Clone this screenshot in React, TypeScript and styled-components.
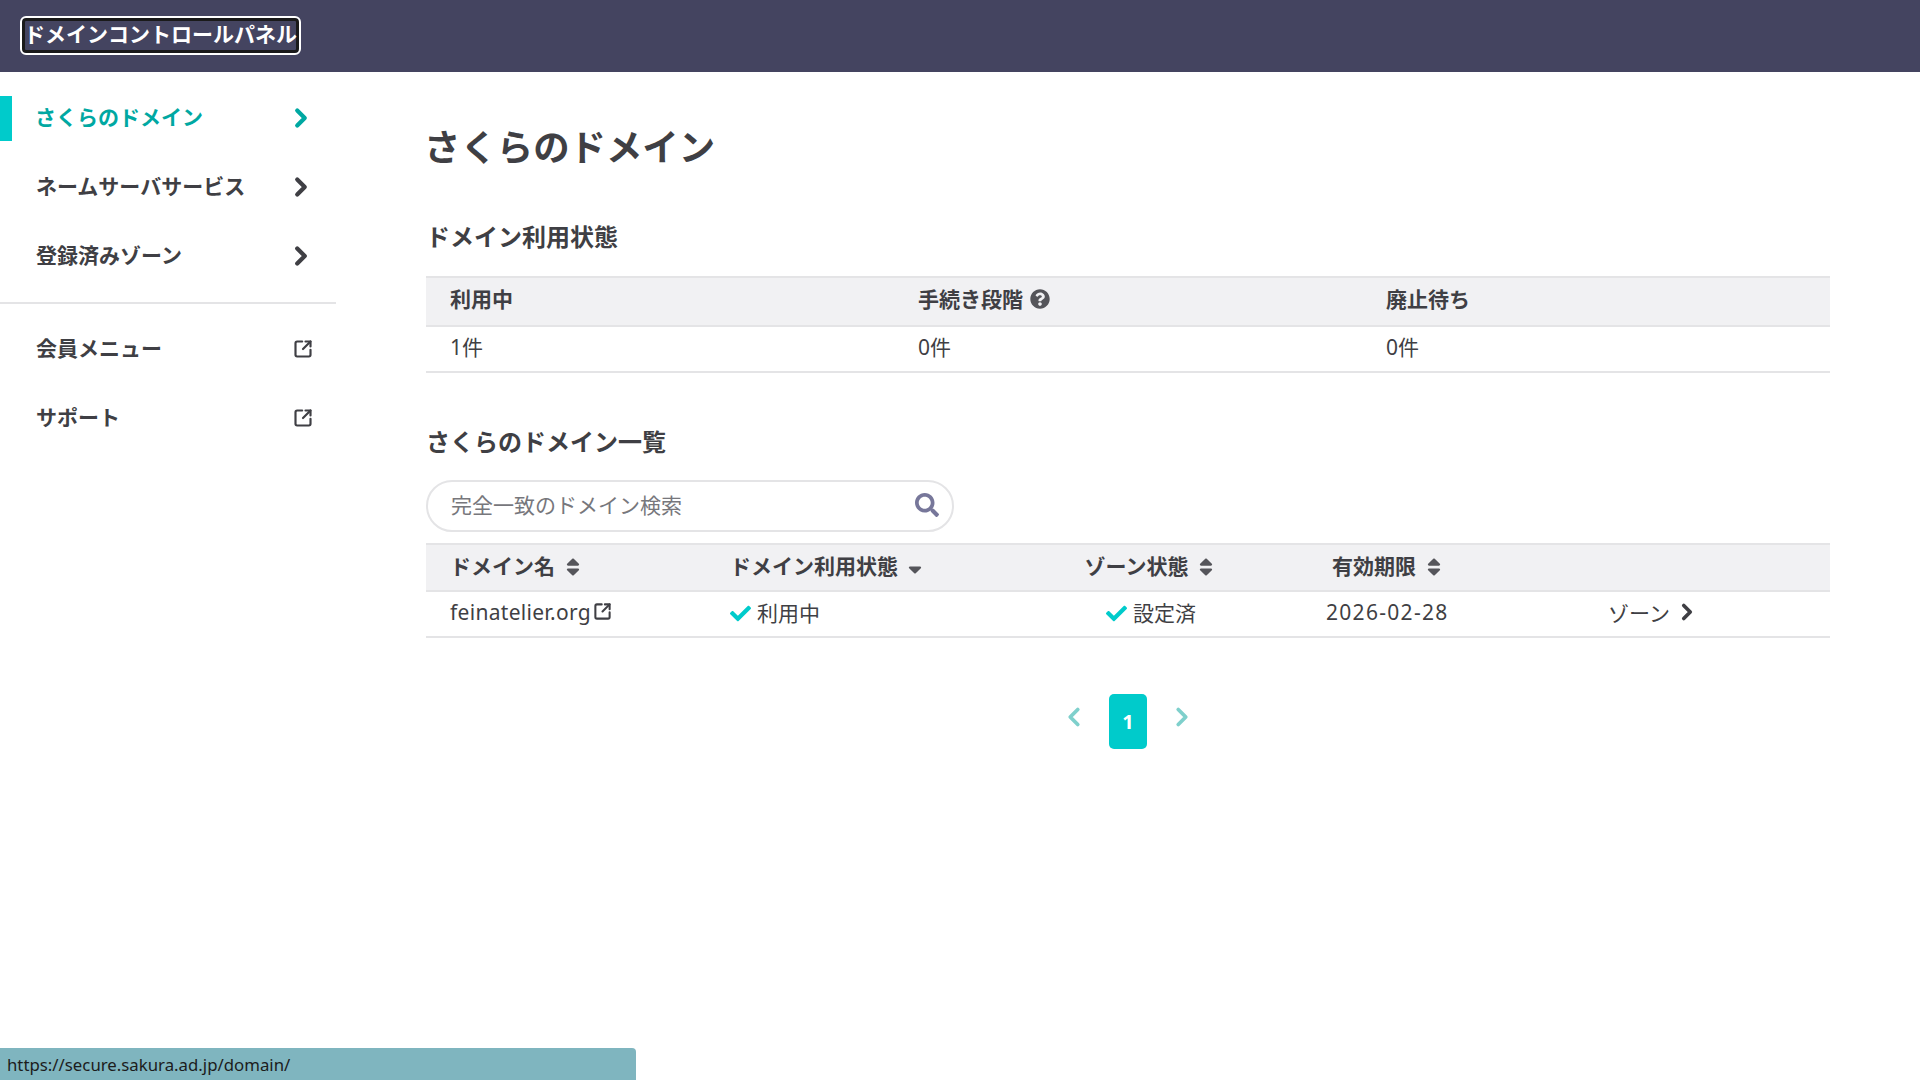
import React from 'react';
import styled, { createGlobalStyle } from 'styled-components';
import { ChevronRight, ChevronLeft, SquareArrowOutUpRight } from 'lucide-react';
import { FaCheck, FaQuestionCircle, FaSearch, FaSort, FaSortDown } from 'react-icons/fa';

const GlobalStyle = createGlobalStyle`
  html, body {
    margin: 0;
    padding: 0;
    background: #fff;
    color: #3f3f44;
    font-family: "Noto Sans", "Noto Sans CJK JP", sans-serif;
    font-size: 21px;
  }
  * {
    box-sizing: border-box;
  }
`;

const Page = styled.div`
  width: 1920px;
  height: 1080px;
  overflow: hidden;
`;

const Header = styled.header`
  height: 72px;
  background: #444460;
  display: flex;
  align-items: center;
  padding: 0 0 1px 20px;
`;

const Logo = styled.a`
  height: 39px;
  width: 281px;
  display: flex;
  align-items: center;
  justify-content: center;
  padding-bottom: 5px;
  border: 2px solid #fff;
  border-radius: 6px;
  box-shadow: inset 0 0 0 3px #1a1a1a;
  color: #fff;
  font-size: 21px;
  font-weight: 700;
  white-space: nowrap;
`;

const Body = styled.div`
  display: flex;
`;

const Sidebar = styled.nav`
  width: 336px;
  flex: none;
  padding-top: 24px;
`;

const NavGroup = styled.div<{ $divided?: boolean }>`
  display: flex;
  flex-direction: column;
  gap: 24px;
  padding-bottom: ${(p) => (p.$divided ? '23px' : '0')};
  margin-bottom: ${(p) => (p.$divided ? '23px' : '0')};
  border-bottom: ${(p) => (p.$divided ? '2px solid #e4e4e6' : 'none')};
`;

const NavItem = styled.a<{ $active?: boolean }>`
  height: 45px;
  display: flex;
  align-items: center;
  justify-content: space-between;
  padding: 0 20px 0 ${(p) => (p.$active ? '23px' : '36px')};
  font-size: 21px;
  font-weight: 700;
  color: ${(p) => (p.$active ? '#00a8a2' : '#3f3f44')};
  border-left: ${(p) => (p.$active ? '12px solid #00cbcb' : 'none')};
`;

const NavLabel = styled.span`
  margin-bottom: 6px;
`;

const NavChevron = styled(ChevronRight)`
  margin-bottom: 2px;
`;

const NavExternal = styled(SquareArrowOutUpRight)`
  margin: 0 3px 2px 0;
`;

const Main = styled.main`
  width: 1404px;
  margin-left: 90px;
  padding-top: 49px;
`;

const PageTitle = styled.h1`
  margin: 0 0 46px -2px;
  font-size: 36.4px;
  line-height: 52px;
  font-weight: 700;
`;

const SectionTitle = styled.h2<{ $tight?: boolean }>`
  margin: 0 0 ${(p) => (p.$tight ? '20px' : '21px')};
  font-size: 24px;
  line-height: 36px;
  font-weight: 700;
`;

const SummaryRow = styled.div<{ $head?: boolean }>`
  display: grid;
  grid-template-columns: repeat(3, 468px);
  height: ${(p) => (p.$head ? '51px' : '46px')};
  padding-bottom: ${(p) => (p.$head ? '7px' : '6px')};
  align-items: center;
  background: ${(p) => (p.$head ? '#f1f1f3' : '#fff')};
  border-bottom: 2px solid #e4e4e6;
  border-top: ${(p) => (p.$head ? '2px solid #e4e4e6' : 'none')};
  font-weight: ${(p) => (p.$head ? 700 : 400)};
  margin-bottom: ${(p) => (p.$head ? '0' : '51px')};
`;

const SummaryCell = styled.div`
  padding-left: 24px;
  display: flex;
  align-items: center;
  gap: 7px;
`;

const HelpIcon = styled(FaQuestionCircle)`
  font-size: 20px;
  color: #55555a;
  margin-top: 2px;
`;

const SearchBox = styled.div`
  width: 528px;
  height: 52px;
  display: flex;
  align-items: center;
  justify-content: space-between;
  padding: 0 13px 4px 23px;
  border: 2px solid #e4e4e6;
  border-radius: 26px;
  margin-bottom: 11px;
  color: #77777c;
`;

const SearchIcon = styled(FaSearch)`
  font-size: 24px;
  color: #77779a;
  margin-top: 1px;
`;

const ListRow = styled.div<{ $head?: boolean }>`
  display: grid;
  grid-template-columns: 280px 294px 300px 283px 247px;
  height: ${(p) => (p.$head ? '49px' : '46px')};
  padding-bottom: 5px;
  align-items: center;
  background: ${(p) => (p.$head ? '#f1f1f3' : '#fff')};
  border-bottom: 2px solid #e4e4e6;
  border-top: ${(p) => (p.$head ? '2px solid #e4e4e6' : 'none')};
  font-weight: ${(p) => (p.$head ? 700 : 400)};
`;

const ListCell = styled.div<{ $center?: boolean; $left?: number; $spacing?: number }>`
  display: flex;
  align-items: center;
  gap: 6px;
  padding-left: ${(p) => (p.$center ? 2 : p.$left ?? 24)}px;
  justify-content: ${(p) => (p.$center ? 'center' : 'flex-start')};
  letter-spacing: ${(p) => p.$spacing ?? 0}px;
`;

const SortIcon = styled(FaSort)`
  font-size: 22px;
  color: #55555a;
  margin: 4px 0 0 1px;
`;

const SortDownIcon = styled(FaSortDown)`
  font-size: 22px;
  color: #55555a;
  margin-left: 0;
`;

const CheckIcon = styled(FaCheck)`
  font-size: 21px;
  color: #00cbcb;
  margin-top: 4px;
`;

const RowExternal = styled(SquareArrowOutUpRight)`
  margin: 0 0 1px -4px;
`;

const RowChevron = styled(ChevronRight)`
  margin-left: -2px;
`;

const Pagination = styled.div`
  display: flex;
  justify-content: center;
  align-items: flex-start;
  gap: 20px;
  margin-top: 56px;
  color: #7fd0cc;
`;

const Arrow = styled.span`
  width: 30px;
  height: 45px;
  display: flex;
  align-items: center;
  justify-content: center;
`;

const PageButton = styled.span`
  width: 38px;
  height: 55px;
  display: flex;
  align-items: center;
  justify-content: center;
  border-radius: 5px;
  background: #00cbcb;
  color: #fff;
  font-weight: 700;
  font-size: 20px;
`;

const StatusBar = styled.div`
  position: fixed;
  left: 0;
  bottom: 0;
  width: 636px;
  height: 32px;
  padding-left: 7px;
  display: flex;
  align-items: center;
  background: #7fb5bf;
  border-top-right-radius: 4px;
  color: #1c1c1c;
  font-size: 16.8px;
`;

const navItems = ['ネームサーバサービス', '登録済みゾーン'];
const outerItems = ['会員メニュー', 'サポート'];

export default function App() {
  return (
    <Page>
      <GlobalStyle />
      <Header>
        <Logo>ドメインコントロールパネル</Logo>
      </Header>
      <Body>
        <Sidebar>
          <NavGroup $divided>
            <NavItem $active>
              <NavLabel>さくらのドメイン</NavLabel>
              <NavChevron size={30} strokeWidth={3.4} />
            </NavItem>
            {navItems.map((label) => (
              <NavItem key={label}>
                <NavLabel>{label}</NavLabel>
                <NavChevron size={30} strokeWidth={3.4} />
              </NavItem>
            ))}
          </NavGroup>
          <NavGroup>
            {outerItems.map((label) => (
              <NavItem key={label}>
                <NavLabel>{label}</NavLabel>
                <NavExternal size={20} strokeWidth={2.6} />
              </NavItem>
            ))}
          </NavGroup>
        </Sidebar>
        <Main>
          <PageTitle>さくらのドメイン</PageTitle>
          <SectionTitle>ドメイン利用状態</SectionTitle>
          <SummaryRow $head>
            <SummaryCell>利用中</SummaryCell>
            <SummaryCell>
              手続き段階
              <HelpIcon />
            </SummaryCell>
            <SummaryCell>廃止待ち</SummaryCell>
          </SummaryRow>
          <SummaryRow>
            <SummaryCell>1件</SummaryCell>
            <SummaryCell>0件</SummaryCell>
            <SummaryCell>0件</SummaryCell>
          </SummaryRow>
          <SectionTitle $tight>さくらのドメイン一覧</SectionTitle>
          <SearchBox>
            完全一致のドメイン検索
            <SearchIcon />
          </SearchBox>
          <ListRow $head>
            <ListCell>
              ドメイン名
              <SortIcon />
            </ListCell>
            <ListCell>
              ドメイン利用状態
              <SortDownIcon />
            </ListCell>
            <ListCell $center>
              ゾーン状態
              <SortIcon />
            </ListCell>
            <ListCell $left={32}>
              有効期限
              <SortIcon />
            </ListCell>
            <ListCell />
          </ListRow>
          <ListRow>
            <ListCell $spacing={0.3}>
              feinatelier.org
              <RowExternal size={19} strokeWidth={2.6} />
            </ListCell>
            <ListCell>
              <CheckIcon />
              利用中
            </ListCell>
            <ListCell $center>
              <CheckIcon />
              設定済
            </ListCell>
            <ListCell $left={26} $spacing={1.3}>
              2026-02-28
            </ListCell>
            <ListCell $left={25}>
              ゾーン
              <RowChevron size={26} strokeWidth={3.4} />
            </ListCell>
          </ListRow>
          <Pagination>
            <Arrow>
              <ChevronLeft size={30} strokeWidth={3} />
            </Arrow>
            <PageButton>1</PageButton>
            <Arrow>
              <ChevronRight size={30} strokeWidth={3} />
            </Arrow>
          </Pagination>
        </Main>
      </Body>
      <StatusBar>https://secure.sakura.ad.jp/domain/</StatusBar>
    </Page>
  );
}
